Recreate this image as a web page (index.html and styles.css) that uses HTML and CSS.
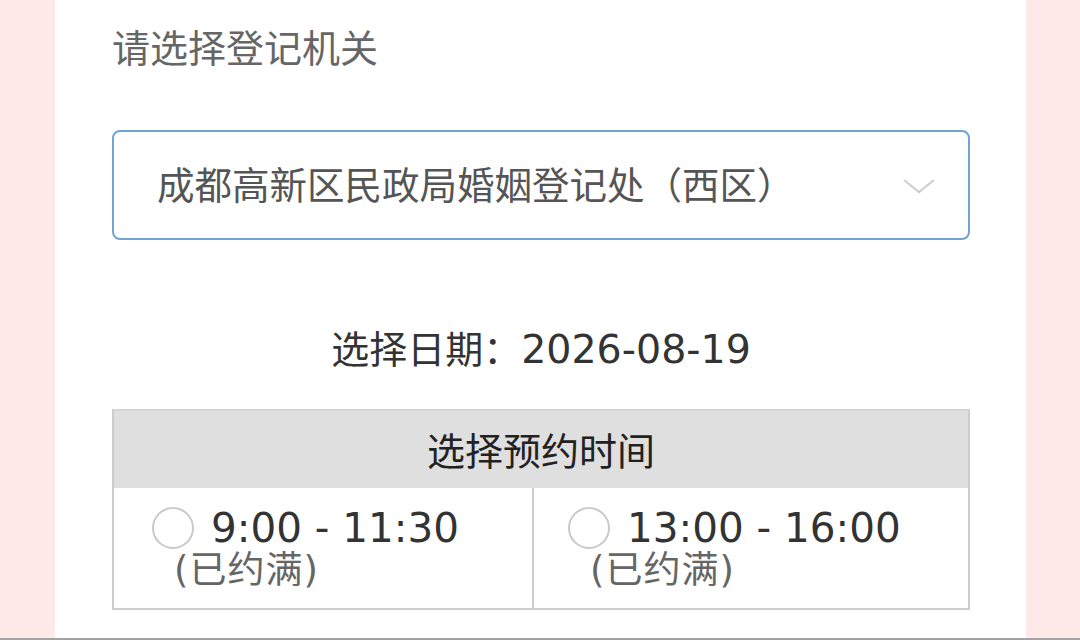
FILE: index.html
```html
<!DOCTYPE html>
<html lang="zh-CN">
<head>
<meta charset="utf-8">
<title>预约登记</title>
<link rel="stylesheet" href="styles.css">
</head>
<body>
<div class="page">
  <main class="card">
    <div class="title">请选择登记机关</div>
    <div class="select">
      <span class="select-text">成都高新区民政局婚姻登记处（西区）</span>
      <svg class="chevron" width="32" height="16" viewBox="0 0 32 16"><path d="M1 2 L16 14 L31 2" fill="none" stroke="#cfcfcf" stroke-width="2.2"/></svg>
    </div>
    <div class="date">选择日期：<span class="num">2026-08-19</span></div>
    <div class="slots">
      <div class="slots-head">选择预约时间</div>
      <div class="slots-row">
        <div class="slot slot-left">
          <div class="slot-line"><span class="radio"></span><span class="num time">9:00 - 11:30</span></div>
          <div class="slot-sub">(已约满)</div>
        </div>
        <div class="slot slot-right">
          <div class="slot-line"><span class="radio"></span><span class="num time">13:00 - 16:00</span></div>
          <div class="slot-sub">(已约满)</div>
        </div>
      </div>
    </div>
  </main>
  <div class="bottom-bar"></div>
</div>
</body>
</html>
```
FILE: styles.css
```css
html, body {
  margin: 0;
  padding: 0;
}
body {
  background: #ffe9e9;
  font-family: "DejaVu Sans", "Noto Sans CJK SC", sans-serif;
  width: 1080px;
  height: 640px;
  overflow: hidden;
}
.page {
  display: flex;
  flex-direction: column;
  height: 640px;
}
.card {
  background: #ffffff;
  margin: 0 54px 0 55px;
  height: 638px;
  padding: 0 56px 0 57px;
  box-sizing: border-box;
  display: flex;
  flex-direction: column;
}
.bottom-bar {
  border-top: 2px solid #a3a3a3;
  background: #f4f4f4;
  flex: 1;
}
.title {
  font-family: "Noto Sans CJK SC", sans-serif;
  font-size: 38px;
  line-height: 50px;
  color: #666666;
  padding-top: 21px;
}
.select {
  margin-top: 59px;
  height: 110px;
  box-sizing: border-box;
  border: 2px solid #72a3d5;
  border-radius: 8px;
  display: flex;
  align-items: center;
  justify-content: space-between;
  padding: 0 33px 0 43px;
}
.select-text {
  font-family: "Noto Sans CJK SC", sans-serif;
  font-size: 37.5px;
  color: #555555;
  line-height: 50px;
  padding-bottom: 4px;
}
.chevron {
  display: block;
  margin-top: 2px;
}
.date {
  margin-top: 82px;
  text-align: center;
  font-family: "Noto Sans CJK SC", sans-serif;
  font-size: 38px;
  line-height: 50px;
  color: #333333;
}
.num {
  font-family: "DejaVu Sans", sans-serif;
  font-size: 39.5px;
}
.slots {
  margin-top: 35px;
  border: 2px solid #cccccc;
  border-top-color: #d4d4d4;
}
.slots-head {
  background: #dfdfdf;
  height: 77px;
  display: flex;
  align-items: center;
  justify-content: center;
  font-family: "Noto Sans CJK SC", sans-serif;
  font-size: 38px;
  color: #222222;
  padding-bottom: 3px;
  box-sizing: border-box;
}
.slots-row {
  display: grid;
  grid-template-columns: 420px 1fr;
  height: 120px;
}
.slot {
  display: flex;
  flex-direction: column;
  padding-top: 18px;
}
.slot-left {
  border-right: 2px solid #cccccc;
  padding-left: 38px;
}
.slot-right {
  padding-left: 34px;
}
.slot-line {
  display: flex;
  align-items: center;
  gap: 17px;
  height: 44px;
}
.radio {
  width: 38px;
  height: 38px;
  border: 2px solid #c9c9c9;
  border-radius: 50%;
  flex: none;
}
.time {
  color: #333333;
  font-size: 40.5px;
  line-height: 44px;
}
.slot-sub {
  font-family: "DejaVu Sans", "Noto Sans CJK SC", sans-serif;
  font-size: 37px;
  line-height: 44px;
  color: #666666;
  padding-left: 22px;
  margin-top: -1px;
  letter-spacing: 1px;
}
```
